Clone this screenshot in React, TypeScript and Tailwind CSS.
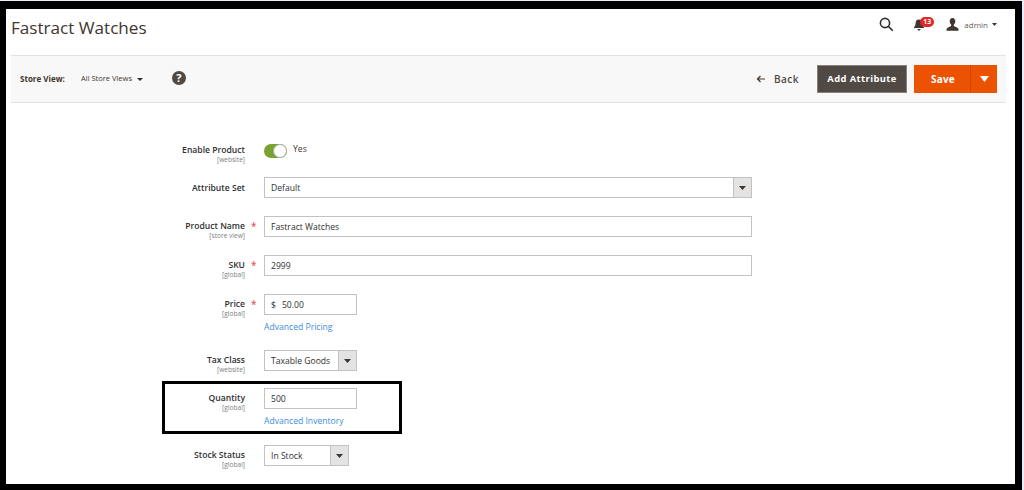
import React from "react";

const Scope = ({ children }: { children: React.ReactNode }) => (
  <div className="text-[6.6px] leading-[7px] mt-[-1px] text-[#808080] text-right">{children}</div>
);

const Label = ({ name, scope, req }: { name: string; scope?: string; req?: boolean }) => (
  <div className="w-[253px] shrink-0 flex justify-end">
    <div className="text-right">
      <div className="text-[8.6px] leading-[13px] font-semibold text-[#303030]">{name}</div>
      {scope && <Scope>{scope}</Scope>}
    </div>
    <div className="w-[19px] shrink-0 text-[#e85a5a] text-[10px] leading-[13px] pl-[6px] font-semibold">{req ? "*" : ""}</div>
  </div>
);

const Arrow = () => (
  <svg width="7" height="4" viewBox="0 0 7 4" className="fill-[#41362f]"><path d="M0 0h7L3.5 4z" /></svg>
);

const Select = ({ value, w }: { value: string; w: string }) => (
  <div className={`${w} h-[21px] flex border border-[#c2c2c2] bg-white text-[8.6px] text-[#303030]`}>
    <div className="flex-1 pl-[6px] leading-[20px]">{value}</div>
    <div className="w-[18px] bg-[#e3e3e3] border-l border-[#c2c2c2] flex items-center justify-center"><Arrow /></div>
  </div>
);

const Input = ({ children, w }: { children: React.ReactNode; w: string }) => (
  <div className={`${w} h-[21px] border border-[#c2c2c2] bg-white text-[8.6px] text-[#303030] pl-[6px] leading-[20px]`}>{children}</div>
);

const Link = ({ children }: { children: React.ReactNode }) => (
  <div className="text-[8.6px] leading-[13px] text-[#3d8ddb] mt-[6px]">{children}</div>
);

export default function App() {
  return (
    <div className="w-[1024px] h-[490px] overflow-hidden bg-[#e8edf5] pt-px font-['Open_Sans',sans-serif]">
      <div className="w-[1022px] h-[489px] bg-black pt-[8px] pb-[6px] pl-[6px] pr-[7px]">
        <div className="relative h-full bg-white pl-[5px] pr-[9px]">
          <header className="h-[46px] flex items-center justify-between">
            <h1 className="text-[17.1px] leading-[24px] text-[#41362f] mt-[-8px]">Fastract Watches</h1>
            <div className="flex items-center mt-[-15px] pr-[9px]">
              <svg width="15" height="15" viewBox="0 0 15 15" fill="none" stroke="#303030" strokeWidth="1.6" className="mr-[19px]">
                <circle cx="6" cy="6" r="4.6" /><path d="M9.4 9.4l4.4 4.4" />
              </svg>
              <div className="relative w-[33px] h-[15px]">
                <svg width="12" height="12" viewBox="0 0 12 12" className="absolute left-0 top-[2px] fill-[#41362f]">
                  <path d="M6 0.5c2.3 0 3.4 1.7 3.4 3.8 0 2 .7 3 1.6 3.9v.8H1v-.8c.9-.9 1.6-1.900 1.600-3.900C2.600 2.200 3.700.5 6 .5zM4.500 10h3c0 1-.7 1.600-1.500 1.600S4.500 11 4.500 10z" />
                </svg>
                <span className="absolute left-[7px] top-0 w-[14px] h-[10px] rounded-[5px] bg-[#e22626] text-white text-[7px] leading-[10px] font-bold text-center">13</span>
              </div>
              <svg width="13" height="13" viewBox="0 0 13 13" className="fill-[#41362f] mr-[5px]">
                <path d="M6.500 0C8.300 0 9.300 1.300 9.300 3.200c0 1.500-.7 2.800-1.500 3.500v1c0 .5 1.200.8 2.700 1.500 1 .5 2 1.100 2 2.300v1.200H.5v-1.200c0-1.200 1-1.800 2-2.300 1.500-.7 2.700-1 2.700-1.500v-1C4.400 6 3.700 4.700 3.700 3.200 3.700 1.300 4.700 0 6.500 0z" />
              </svg>
              <span className="text-[8px] text-[#676056] mr-[4px]">admin</span>
              <svg width="5" height="3" viewBox="0 0 5 3" className="fill-[#41362f]"><path d="M0 0h5L2.500 3z" /></svg>
            </div>
          </header>

          <div className="h-[48px] bg-[#f8f8f8] border-y border-[#e3e3e3] flex items-center justify-between pl-[9px] pr-[9px]">
            <div className="flex items-center">
              <span className="text-[8px] font-bold text-[#41362f] w-[61px]">Store View:</span>
              <span className="text-[7.5px] text-[#41362f] mr-[5px]">All Store Views</span>
              <svg width="6" height="3" viewBox="0 0 6 3" className="fill-[#303030] mr-[29px]"><path d="M0 0h6L3 3z" /></svg>
              <span className="w-[14px] h-[14px] rounded-full bg-[#514943] text-white text-[11px] leading-[14px] font-bold text-center mt-[-2px]">?</span>
            </div>
            <div className="flex items-center">
              <svg width="10" height="8" viewBox="0 0 10 8" fill="none" stroke="#41362f" strokeWidth="1.200" className="mr-[8px]">
                <path d="M9 4H1.500M4.500 1L1.500 4l3 3" />
              </svg>
              <span className="text-[10px] font-semibold tracking-[0.5px] text-[#514943] mr-[18px]">Back</span>
              <div className="w-[90px] h-[28px] bg-[#514943] border border-[#8a817a] text-white text-[9.4px] font-bold tracking-[0.4px] leading-[26px] text-center mr-[7px]">Add Attribute</div>
              <div className="w-[83px] h-[28px] bg-[#eb5202] flex text-white text-[10px] font-bold leading-[28px]">
                <div className="w-[57px] text-center tracking-[0.2px] border-r border-[#c94602] pl-[2px]">Save</div>
                <div className="flex-1 flex items-center justify-center">
                  <svg width="9" height="6" viewBox="0 0 9 6" className="fill-white"><path d="M0 0h9L4.500 6z" /></svg>
                </div>
              </div>
            </div>
          </div>

          <main className="pt-[40px]">
            <div className="flex h-[34px]">
              <div className="pt-[1px] flex"><Label name="Enable Product" scope="[website]" /></div>
              <div className="w-[23px] h-[14px] rounded-full bg-[#79a22e] relative mt-[1px]">
                <span className="absolute right-0 top-0 w-[14px] h-[14px] rounded-full bg-white border border-[#adadad]" />
              </div>
              <span className="ml-[6px] text-[8.6px] leading-[13px] text-[#41362f]">Yes</span>
            </div>
            <div className="flex h-[39px] items-start">
              <div className="w-[253px] shrink-0 pr-[19px] text-right text-[8.6px] leading-[22px] font-semibold text-[#303030]">Attribute Set</div>
              <Select value="Default" w="w-[488px]" />
            </div>
            <div className="flex h-[39px]">
              <div className="pt-[4px] flex"><Label name="Product Name" scope="[store view]" req /></div>
              <Input w="w-[488px]">Fastract Watches</Input>
            </div>
            <div className="flex h-[39px]">
              <div className="pt-[4px] flex"><Label name="SKU" scope="[global]" req /></div>
              <Input w="w-[488px]">2999</Input>
            </div>
            <div className="flex h-[56px]">
              <div className="pt-[4px] flex"><Label name="Price" scope="[global]" req /></div>
              <div>
                <Input w="w-[93px]"><span className="mr-[6px]">$</span>50.00</Input>
                <Link>Advanced Pricing</Link>
              </div>
            </div>
            <div className="flex h-[38px]">
              <div className="pt-[4px] flex"><Label name="Tax Class" scope="[website]" /></div>
              <Select value="Taxable Goods" w="w-[93px]" />
            </div>
            <div className="relative flex h-[57px]">
              <div className="pt-[4px] flex"><Label name="Quantity" scope="[global]" /></div>
              <div>
                <Input w="w-[93px]">500</Input>
                <Link>Advanced Inventory</Link>
              </div>
              <div className="absolute left-[151px] top-[-7px] w-[240px] h-[53px] border-[3px] border-black" />
            </div>
            <div className="flex">
              <div className="pt-[4px] flex"><Label name="Stock Status" scope="[global]" /></div>
              <Select value="In Stock" w="w-[85px]" />
            </div>
          </main>
        </div>
      </div>
    </div>
  );
}
